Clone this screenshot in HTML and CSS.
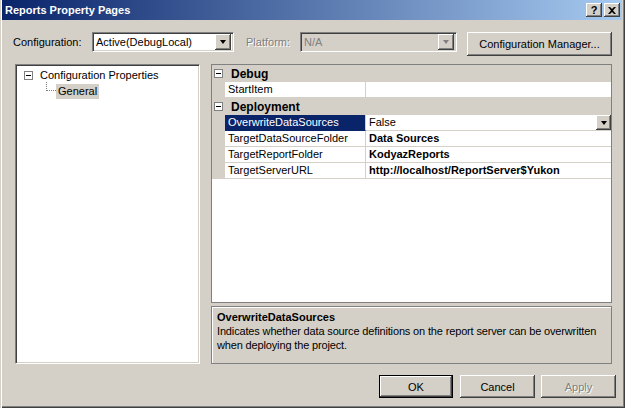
FILE: index.html
```html
<!DOCTYPE html>
<html>
<head>
<meta charset="utf-8">
<link rel="stylesheet" href="styles.css">
</head>
<body>
<div class="window">
  <div class="titlebar">
    <span class="title">Reports Property Pages</span>
    <div class="tbtns">
      <div class="tbtn help">?</div>
      <div class="tbtn close"><svg width="8" height="7" viewBox="0 0 8 7"><path d="M0 0h2l2 2 2-2h2L5 3.5 8 7H6L4 5 2 7H0l3-3.5z" fill="#000"/></svg></div>
    </div>
  </div>

  <div class="config-row">
    <span class="lbl cfg">Configuration:</span>
    <div class="combo cfg-combo">
      <span class="ctext">Active(DebugLocal)</span>
      <div class="arrow"><span class="tri"></span></div>
    </div>
    <span class="lbl plat disabled">Platform:</span>
    <div class="combo plat-combo off">
      <span class="ctext">N/A</span>
      <div class="arrow"><span class="tri"></span></div>
    </div>
    <div class="btn cfgmgr">Configuration Manager...</div>
  </div>

  <div class="main">
    <div class="tree">
      <div class="tnode">
        <span class="pm"><span class="minus"></span></span>
        <span class="tlabel">Configuration Properties</span>
      </div>
      <div class="tchild">
        <span class="dots"></span>
        <span class="tsel">General</span>
      </div>
    </div>

    <div class="right">
      <div class="grid">
        <div class="cat">
          <span class="gpm"><span class="minus"></span></span>
          <span class="catname">Debug</span>
        </div>
        <div class="prow">
          <span class="gut"></span>
          <span class="pname">StartItem</span>
          <span class="pval"></span>
        </div>
        <div class="cat">
          <span class="gpm"><span class="minus"></span></span>
          <span class="catname">Deployment</span>
        </div>
        <div class="prow">
          <span class="gut"></span>
          <span class="pname sel">OverwriteDataSources</span>
          <span class="pval">False<span class="varrow"><span class="tri"></span></span></span>
        </div>
        <div class="prow">
          <span class="gut"></span>
          <span class="pname">TargetDataSourceFolder</span>
          <span class="pval b">Data Sources</span>
        </div>
        <div class="prow">
          <span class="gut"></span>
          <span class="pname">TargetReportFolder</span>
          <span class="pval b">KodyazReports</span>
        </div>
        <div class="prow">
          <span class="gut"></span>
          <span class="pname">TargetServerURL</span>
          <span class="pval b">http://localhost/ReportServer$Yukon</span>
        </div>
      </div>
      <div class="desc">
        <div class="dtitle">OverwriteDataSources</div>
        <div class="dtext">Indicates whether data source definitions on the report server can be overwritten when deploying the project.</div>
      </div>
    </div>
  </div>

  <div class="buttons">
    <div class="btn ok">OK</div>
    <div class="btn cancel">Cancel</div>
    <div class="btn apply disabled">Apply</div>
  </div>
</div>
</body>
</html>
```

FILE: styles.css
```css
* { box-sizing: border-box; }
html, body { margin: 0; padding: 0; background: #d4d0c8; }
body { font-family: "Liberation Sans", Arial, sans-serif; font-size: 11px; color: #000; }

.window {
  width: 625px; height: 408px;
  background: #d4d0c8;
  padding: 0 3px 0 2px;
  box-shadow: inset 1px 0 #d4d0c8, inset 2px 0 #ffffff, inset -1px -1px #404040, inset -2px -2px #808080;
  display: flex; flex-direction: column;
}

.titlebar {
  height: 20px;
  background: linear-gradient(to right, #0a246a, #a6caf0);
  display: flex; align-items: center; justify-content: space-between;
  padding: 0 2px 0 3px;
}
.title { color: #fff; font-weight: bold; font-size: 11px; }
.tbtns { display: flex; gap: 2px; }
.tbtn {
  width: 16px; height: 14px; background: #d4d0c8;
  box-shadow: inset -1px -1px #404040, inset 1px 1px #ffffff, inset -2px -2px #808080;
  display: flex; align-items: center; justify-content: center;
  font-weight: bold; font-size: 11px; line-height: 14px;
}
.tbtn.help { padding-bottom: 1px; }

.config-row {
  margin-top: 12px; height: 24px;
  display: flex; align-items: flex-start;
}
.lbl { height: 20px; line-height: 20px; }
.cfg { margin-left: 11px; width: 79px; }
.plat { margin-left: 12px; width: 54px; }
.disabled { color: #808080; text-shadow: 1px 1px 0 #ffffff; }

.combo {
  height: 20px; background: #fff;
  border-top: 1px solid #808080; border-left: 1px solid #808080;
  border-bottom: 1px solid #ffffff; border-right: 1px solid #ffffff;
  box-shadow: inset 1px 1px #404040, inset -1px -1px #d4d0c8;
  display: flex; align-items: center; justify-content: space-between;
  padding: 2px;
}
.cfg-combo { width: 142px; }
.plat-combo { width: 157px; margin-left: 0; }
.combo.off { background: #d4d0c8; }
.ctext { padding-left: 1px; line-height: 14px; }
.combo.off .ctext { color: #808080; }
.arrow {
  width: 16px; height: 16px; background: #d4d0c8;
  box-shadow: inset -1px -1px #404040, inset 1px 1px #ffffff, inset -2px -2px #808080;
  display: flex; align-items: center; justify-content: center;
}
.tri {
  width: 0; height: 0;
  border-left: 3.5px solid transparent; border-right: 3.5px solid transparent;
  border-top: 4px solid #000;
}
.combo.off .tri { border-top-color: #808080; }

.btn {
  height: 23px; background: #d4d0c8;
  box-shadow: inset -1px -1px #404040, inset 1px 1px #ffffff, inset -2px -2px #808080;
  display: flex; align-items: center; justify-content: center;
}
.cfgmgr { margin-left: 10px; width: 145px; height: 24px; }

.main {
  margin-top: 8px; height: 300px;
  display: flex; gap: 11px;
  padding-left: 13px;
}
.tree {
  width: 185px; height: 300px; background: #fff;
  border-top: 1px solid #808080; border-left: 1px solid #808080;
  border-bottom: 1px solid #ffffff; border-right: 1px solid #ffffff;
  box-shadow: inset 1px 1px #404040, inset -1px -1px #d4d0c8;
  padding: 2px 0 0 8px;
}
.tnode { display: flex; align-items: center; height: 16px; }
.pm, .gpm {
  width: 9px; height: 9px; border: 1px solid #808080; background: #fff;
  display: flex; align-items: center; justify-content: center;
}
.minus { width: 5px; height: 1px; background: #000; }
.tlabel { margin-left: 7px; }
.tchild { display: flex; align-items: flex-start; height: 16px; margin-left: 22px; }
.dots {
  width: 10px; height: 9px; margin-top: -1px;
  border-left: 1px dotted #808080; border-bottom: 1px dotted #808080;
}
.tsel { background: #d4d0c8; padding: 1px 2px; line-height: 13px; height: 15px; margin-top: 1px; }

.right { width: 401px; display: flex; flex-direction: column; gap: 3px; }
.grid {
  height: 239px; background: #fff;
  border: 1px solid #808080;
  display: flex; flex-direction: column;
}
.cat {
  height: 17px; background: #d4d0c8;
  display: flex; align-items: center;
  padding-left: 2px;
}
.catname { font-weight: bold; font-size: 12px; margin-left: 8px; }
.prow { height: 16px; display: flex; }
.gut { width: 13px; background: #d4d0c8; flex: none; }
.pname {
  width: 141px; flex: none;
  border-right: 1px solid #d4d0c8; border-bottom: 1px solid #d4d0c8;
  padding-left: 3px; line-height: 15px;
}
.pname.sel { background: #0a246a; color: #fff; border-bottom-color: #0a246a; }
.pval {
  flex: 1; border-bottom: 1px solid #d4d0c8;
  padding-left: 3px; line-height: 15px;
  display: flex; justify-content: space-between;
}
.pval.b { font-weight: bold; }
.varrow {
  width: 15px; height: 15px; background: #d4d0c8;
  box-shadow: inset -1px -1px #404040, inset 1px 1px #ffffff, inset -2px -2px #808080;
  display: flex; align-items: center; justify-content: center;
  margin-right: 0;
}

.desc {
  height: 58px;
  border: 1px solid #808080;
  box-shadow: inset 1px 1px #ffffff;
  padding: 3px 5px;
}
.dtitle { font-weight: bold; line-height: 14px; }
.dtext { line-height: 14px; letter-spacing: -0.15px; }

.buttons {
  margin-top: 11px;
  display: flex; justify-content: flex-end; gap: 6px;
  padding-right: 6px;
}
.ok { width: 74px; margin-right: 1px; border: 1px solid #000; }
.cancel { width: 75px; }
.apply { width: 75px; }
```
